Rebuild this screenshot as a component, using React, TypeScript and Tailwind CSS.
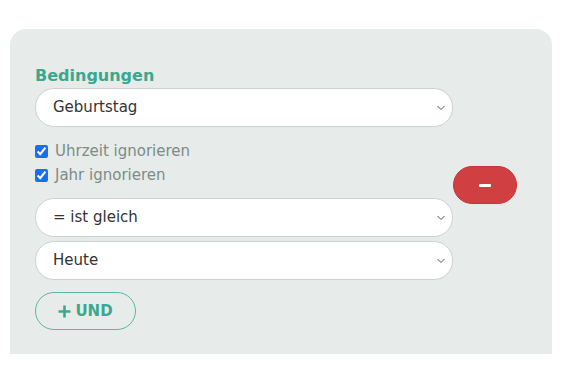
import { useState } from 'react'

const font = { fontFamily: '"DejaVu Sans", Inter, sans-serif' }

function Chevron() {
  return (
    <svg
      className="pointer-events-none absolute right-[8px] top-1/2 -translate-y-1/2"
      width="8"
      height="5"
      viewBox="0 0 8 5"
      fill="none"
    >
      <path d="M0.5 0.5 L4 4 L7.5 0.5" stroke="#555" strokeWidth="1" />
    </svg>
  )
}

function Select({ value, options }: { value: string; options: string[] }) {
  const [v, setV] = useState(value)
  return (
    <div className="relative w-full">
      <select
        value={v}
        onChange={e => setV(e.target.value)}
        className="h-[39px] w-full appearance-none rounded-[19px] border border-[#ccd1d3] bg-white pl-[17px] pr-8 text-[15px] text-[#333] outline-none"
        style={font}
      >
        {options.map(o => (
          <option key={o}>{o}</option>
        ))}
      </select>
      <Chevron />
    </div>
  )
}

function Check({ label }: { label: string }) {
  const [on, setOn] = useState(true)
  return (
    <label className="flex h-[24px] items-center gap-[7px] text-[15px] text-[#7c8c87]">
      <input
        type="checkbox"
        checked={on}
        onChange={() => setOn(!on)}
        className="m-0 h-[13px] w-[13px] accent-[#1a6ef5]"
      />
      {label}
    </label>
  )
}

export default function App() {
  return (
    <div className="min-h-[372px] bg-white pt-[29px]" style={font}>
      <div className="ml-[10px] h-[325px] w-[542px] rounded-t-[16px] bg-[#e7ebea] pl-[25px] pt-[35px]">
        <h2 className="text-[16px] font-bold leading-[24px] text-[#3aa88e]">Bedingungen</h2>
        <div className="flex items-center">
          <div className="flex w-[418px] flex-col">
            <Select value="Geburtstag" options={['Geburtstag', 'Name', 'Eintrittsdatum']} />
            <div className="mt-[12px] flex flex-col">
              <Check label="Uhrzeit ignorieren" />
              <Check label="Jahr ignorieren" />
            </div>
            <div className="mt-[11px] flex flex-col gap-[4px]">
              <Select value="= ist gleich" options={['= ist gleich', '≠ ist ungleich']} />
              <Select value="Heute" options={['Heute', 'Morgen', 'Gestern']} />
            </div>
          </div>
          <button className="mt-[2px] flex h-[38px] w-[64px] items-center justify-center rounded-[19px] border border-[#c4343a] bg-[#d03f42]">
            <span className="block h-[3px] w-[12px] rounded-[1px] bg-white" />
          </button>
        </div>
        <button className="mt-[12px] flex h-[38px] w-[101px] items-center justify-center gap-[4px] rounded-[19px] border border-[#5bb8a0] text-[15px] font-bold text-[#3aa88e]">
          <svg width="13" height="13" viewBox="0 0 13 13">
            <path d="M6.5 0.5V12.5M0.5 6.5H12.5" stroke="#3aa88e" strokeWidth="2.6" />
          </svg>
          UND
        </button>
      </div>
    </div>
  )
}
